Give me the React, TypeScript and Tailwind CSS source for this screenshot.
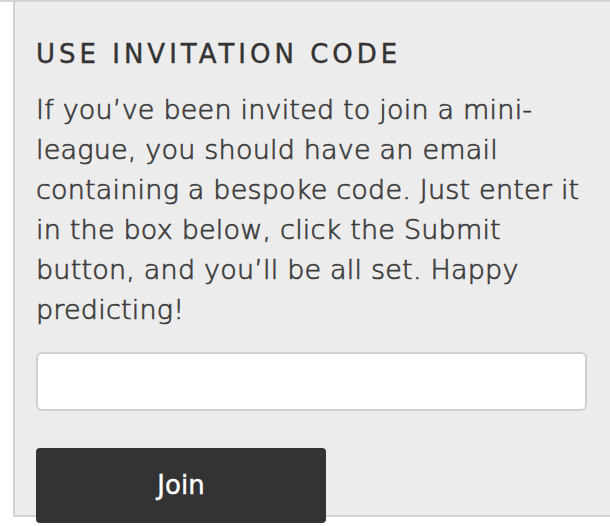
import { useState } from 'react'

// Mini-league invitation code panel

export default function App() {
  const [code, setCode] = useState('')

  return (
    <div className="w-[610px] h-[526px] overflow-hidden bg-white border-t-2 border-[#d4d4d4] font-['DejaVu_Sans',sans-serif]">
      <div className="ml-[13px] h-[515px] bg-[#ececec] border-l-2 border-b-2 border-[#d4d4d4] pl-[21px] pr-[20px] pt-[32px]">
        <h2 className="text-[26px] leading-[40px] tracking-[4px] text-[#333] uppercase [-webkit-text-stroke:0.4px_#333]">
          Use invitation code
        </h2>
        <p className="mt-[16px] text-[27px] leading-[40px] font-light text-[#3c3c3c] tracking-[0.2px] [-webkit-text-stroke:0.7px_#3c3c3c]">
          If you’ve been invited to join a mini-league, you should have an email containing a
          bespoke code. Just enter it in the box below, click the Submit button, and you’ll be all
          set. Happy predicting!
        </p>
        <input
          value={code}
          onChange={e => setCode(e.target.value)}
          className="block mt-[22px] w-[551px] h-[59px] bg-white border-2 border-[#d0d0d0] rounded-[6px] px-3 text-[22px] outline-none"
        />
        <button className="block mt-[37px] w-[290px] h-[75px] bg-[#333] text-white text-[26px] rounded-[4px] [-webkit-text-stroke:0.4px_#fff]">
          Join
        </button>
      </div>
    </div>
  )
}
